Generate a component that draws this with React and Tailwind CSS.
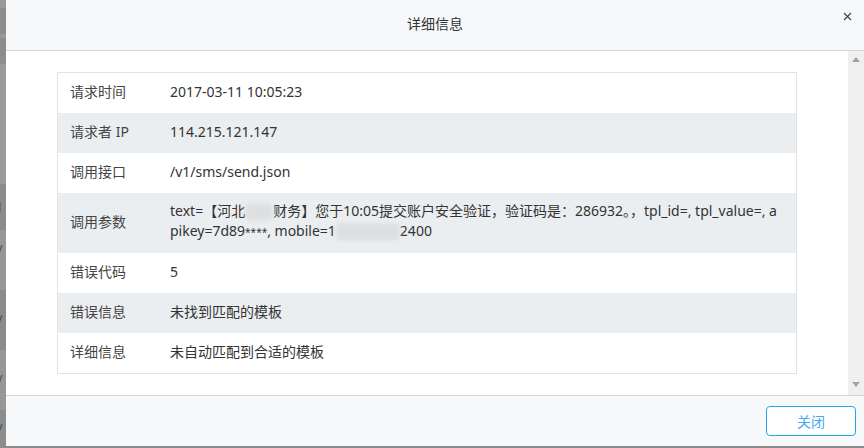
import React from "react";

const FONT = { fontFamily: '"Noto Sans", "Noto Sans CJK SC", sans-serif' };

const ROWS = [
  { label: "请求时间", value: "2017-03-11 10:05:23" },
  { label: "请求者 IP", value: "114.215.121.147" },
  { label: "调用接口", value: "/v1/sms/send.json" },
  { label: "调用参数", value: "params" },
  { label: "错误代码", value: "5" },
  { label: "错误信息", value: "未找到匹配的模板" },
  { label: "详细信息", value: "未自动匹配到合适的模板" },
];

function Masked({ w }) {
  return (
    <span
      className="inline-block h-[18px] align-middle rounded-[6px] bg-[#dedfe0] blur-[2px]"
      style={{ width: w }}
    />
  );
}

function ParamsValue() {
  return (
    <div className="leading-5">
      <div className="whitespace-nowrap">
        text=【河北<Masked w={28} />财务】您于10:05提交账户安全验证，验证码是：286932。，tpl_id=, tpl_value=, a
      </div>
      <div className="whitespace-nowrap">
        pikey=7d89<span className="text-[10px]">****</span>, mobile=1<Masked w={64} />2400
      </div>
    </div>
  );
}

function Backdrop() {
  // sliver of the page list showing behind the dialog
  const bands = [
    ["h-[8px]", "bg-[#9a9a9a]"],
    ["h-[26px]", "bg-[#8d8d8d]"],
    ["h-[4px]", "bg-[#9a9a9a]"],
    ["h-[26px]", "bg-[#8d8d8d]"],
    ["h-[120px]", "bg-[#9a9a9a]"],
    ["h-[46px]", "bg-[#8c8c8c]", "J"],
    ["h-[40px]", "bg-[#979797]", "/"],
    ["h-[20px]", "bg-[#979797]"],
    ["h-[60px]", "bg-[#8c8c8c]", "/"],
    ["h-[60px]", "bg-[#979797]", "/"],
    ["h-[38px]", "bg-[#8c8c8c]", "/"],
  ];
  return (
    <div className="w-[6px] shrink-0 flex flex-col overflow-hidden">
      {bands.map(([h, bg, t], i) => (
        <div key={i} className={`${h} ${bg} flex items-center text-[12px] text-[#2b4a66] leading-none -ml-[2px]`}>
          {t}
        </div>
      ))}
    </div>
  );
}

export default function App() {
  return (
    <div className="w-[864px] h-[448px] bg-[#8a8a8a] flex overflow-hidden" style={FONT}>
      <Backdrop />
      <div className="flex-1 h-[446px] bg-white flex flex-col text-[14px] text-[#333]">
        <div className="h-[51px] shrink-0 bg-[#f7f8fa] border-b border-[#d6d6d6] flex items-center justify-center relative">
          <span className="text-[14px] text-[#333] -mt-[4px]">详细信息</span>
          <svg className="absolute right-[12px] top-[12px]" width="9" height="9" viewBox="0 0 9 9">
            <path d="M1 1L8 8M8 1L1 8" stroke="#3a3f45" strokeWidth="1.1" />
          </svg>
        </div>

        <div className="flex-1 flex min-h-0">
          <div className="flex-1 pl-[51px] pr-[51px] pt-[21px]">
            <div className="border border-[#e3e3e3]">
              {ROWS.map((r, i) => (
                <div
                  key={r.label}
                  className={`grid grid-cols-[100px_1fr] items-center ${
                    r.value === "params" ? "h-[60px]" : "h-[40px]"
                  } ${i % 2 === 1 ? "bg-[#ebeef0]" : "bg-white"}`}
                >
                  <div className="pl-[12px] -mt-[3px] text-[#444]">{r.label}</div>
                  <div className="pl-[12px] -mt-[3px] text-[#333]">
                    {r.value === "params" ? <ParamsValue /> : r.value}
                  </div>
                </div>
              ))}
            </div>
          </div>
          <div className="w-[16px] shrink-0 bg-[#f0f0f0] flex flex-col items-center justify-between pt-[6px] pb-[8px]">
            <svg width="8" height="5" viewBox="0 0 8 5">
              <path d="M0 5L4 0L8 5Z" fill="#a3a3a3" />
            </svg>
            <svg width="8" height="5" viewBox="0 0 8 5">
              <path d="M0 0L8 0L4 5Z" fill="#a3a3a3" />
            </svg>
          </div>
        </div>

        <div className="h-[51px] shrink-0 bg-[#f7f8fa] border-t border-[#d6d6d6] flex items-center justify-end pr-[8px]">
          <button className="w-[90px] h-[30px] rounded-[4px] border border-[#2ba3ea] bg-white text-[14px] text-[#4ba6f0]">
            关闭
          </button>
        </div>
      </div>
    </div>
  );
}
